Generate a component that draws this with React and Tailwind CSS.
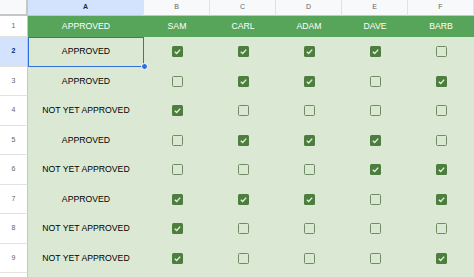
import React from 'react';

const names = ['SAM', 'CARL', 'ADAM', 'DAVE', 'BARB'];
const rows = [
  ['APPROVED', [1, 1, 1, 1, 0]],
  ['APPROVED', [0, 1, 1, 0, 1]],
  ['NOT YET APPROVED', [1, 0, 0, 0, 0]],
  ['APPROVED', [0, 1, 1, 1, 0]],
  ['NOT YET APPROVED', [0, 0, 0, 1, 1]],
  ['APPROVED', [1, 1, 1, 0, 1]],
  ['NOT YET APPROVED', [1, 0, 0, 0, 0]],
  ['NOT YET APPROVED', [1, 0, 0, 0, 1]],
];

function Box({ on }) {
  if (on) {
    return (
      <div className="w-[11px] h-[11px] rounded-[1.5px] bg-[#4e7e3f] flex items-center justify-center">
        <svg width="9" height="9" viewBox="0 0 10 10">
          <path d="M2 5.2 L4.1 7.2 L8 2.9" fill="none" stroke="#e6f0e0" strokeWidth="1.5" />
        </svg>
      </div>
    );
  }
  return <div className="w-[11px] h-[11px] rounded-[1.5px] border-[1.5px] border-[#6f8c64]" />;
}

export default function App() {
  const letters = ['A', 'B', 'C', 'D', 'E', 'F'];
  return (
    <div className="w-[474px] h-[277px] bg-white overflow-hidden text-[8.7px] text-black" style={{ fontFamily: '"Liberation Sans", Arial, sans-serif' }}>
      <div className="grid grid-cols-[28px_116px_66px_66px_66px_66px_66px]">
        {/* column letters */}
        <div className="h-[16px] bg-[#f8f9fa] border-r-[2px] border-b-[2px] border-[#c4c7c5]" />
        {letters.map((l) => (
          <div
            key={l}
            className={`h-[16px] flex items-center justify-center text-[7px] border-b border-[#c4c7c5] border-r border-r-[#e1e3e1] ${l === 'A' ? 'bg-[#d3e3fd] text-[#1f2937] font-bold' : 'bg-[#f8f9fa] text-[#5f6368]'}`}
          >
            {l}
          </div>
        ))}

        {/* header row */}
        <div className="h-[21px] flex items-center justify-center text-[7px] text-[#5f6368] border-r border-[#c4c7c5] border-b border-b-[#e1e3e1]">1</div>
        <div className="h-[21px] bg-[#57a55a] text-white flex items-center justify-center">APPROVED</div>
        {names.map((n) => (
          <div key={n} className="h-[21px] bg-[#57a55a] text-white flex items-center justify-center">{n}</div>
        ))}

        {rows.map(([status, checks], i) => (
          <React.Fragment key={i}>
            <div
              className={`h-[29.5px] flex items-center justify-center text-[7px] border-r border-[#c4c7c5] border-b border-b-[#e1e3e1] ${i === 0 ? 'bg-[#d3e3fd] text-[#0b2a6b] font-bold' : 'text-[#5f6368]'}`}
            >
              {i + 2}
            </div>
            <div className="relative h-[29.5px] bg-[#dbe9d4] flex items-center justify-center">
              {status}
              {i === 0 && (
                <>
                  <div className="absolute inset-0 border-[1.5px] border-[#2f6fd6]" />
                  <div className="absolute z-10 -right-[3.5px] -bottom-[3.5px] w-[7px] h-[7px] rounded-full bg-[#2f6fd6] border border-white" />
                </>
              )}
            </div>
            {checks.map((c, j) => (
              <div key={j} className="h-[29.5px] bg-[#dbe9d4] flex items-center justify-center">
                <Box on={c} />
              </div>
            ))}
          </React.Fragment>
        ))}
        <div className="h-[4px] border-r border-[#c4c7c5]" />
        <div className="col-span-6 h-[4px] bg-[#dbe9d4]" />
      </div>
    </div>
  );
}
